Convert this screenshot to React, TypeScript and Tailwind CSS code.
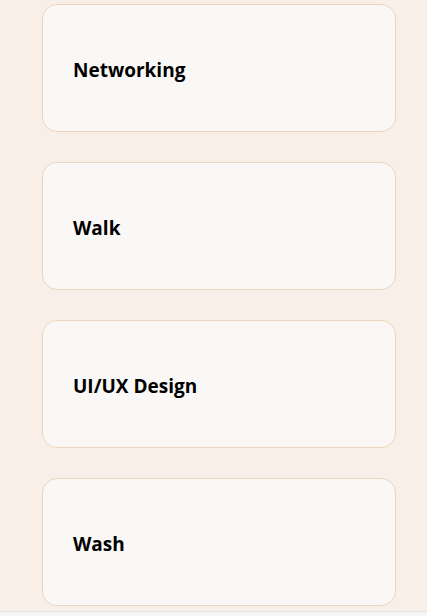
export default function App() {
  const items = ["Networking", "Walk", "UI/UX Design", "Wash"];
  return (
    <div className="h-[616px] w-[427px] overflow-hidden bg-[#f7f7f7]" style={{ fontFamily: '"Open Sans", "Noto Sans", sans-serif' }}>
      <div className="h-[611px] bg-[#f7efe8] pt-[4px] shadow-[0_1px_1px_rgba(0,0,0,0.08)]">
        <div className="flex flex-col gap-[30px] pl-[42px] pr-[31px]">
          {items.map((t) => (
            <div
              key={t}
              className="flex h-[128px] items-center rounded-[15px] border border-[#edd5bd] bg-[#faf8f6] pl-[30px] pt-[4px]"
            >
              <span className="text-[19px] font-bold text-black">{t}</span>
            </div>
          ))}
        </div>
      </div>
    </div>
  );
}
